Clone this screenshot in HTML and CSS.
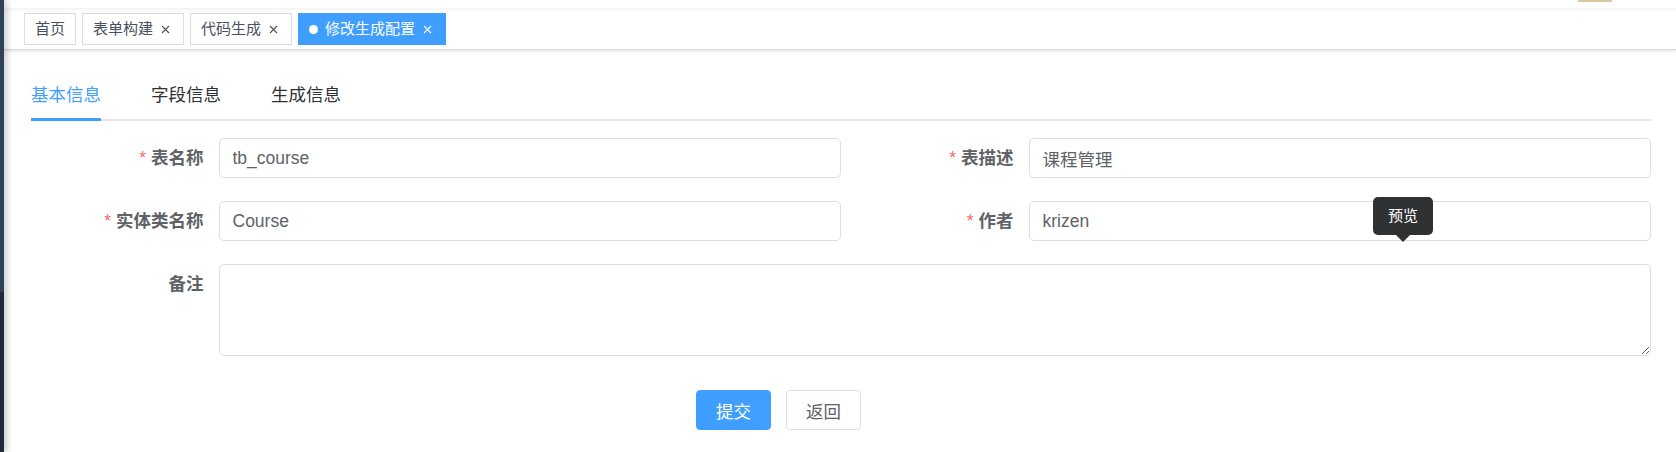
FILE: index.html
```html
<!DOCTYPE html>
<html lang="zh-CN">
<head>
  <meta charset="UTF-8">
  <meta name="viewport" content="width=device-width, initial-scale=1.0">
  <title>修改生成配置</title>
  <link rel="stylesheet" href="styles.css">
</head>
<body>
  <div class="layout">
    <aside class="sidebar"></aside>
    <div class="main">
      <div class="navbar"><span class="avatar-edge"></span></div>
      <div class="tags-view">
        <span class="tag">首页</span>
        <span class="tag">表单构建<i class="tag-close"><svg width="9" height="9" viewBox="0 0 9 9"><path d="M1 1L8 8M8 1L1 8"/></svg></i></span>
        <span class="tag">代码生成<i class="tag-close"><svg width="9" height="9" viewBox="0 0 9 9"><path d="M1 1L8 8M8 1L1 8"/></svg></i></span>
        <span class="tag active"><span class="dot"></span>修改生成配置<i class="tag-close"><svg width="9" height="9" viewBox="0 0 9 9"><path d="M1 1L8 8M8 1L1 8"/></svg></i></span>
      </div>

      <div class="app-container">
        <div class="tabs">
          <div class="tab active">基本信息</div>
          <div class="tab">字段信息</div>
          <div class="tab">生成信息</div>
        </div>

        <form class="gen-form" onsubmit="return false">
          <div class="form-row">
            <div class="form-item">
              <label class="form-label required">表名称</label>
              <div class="form-content"><input class="input" type="text" value="tb_course"></div>
            </div>
            <div class="form-item">
              <label class="form-label required">表描述</label>
              <div class="form-content"><input class="input" type="text" value="课程管理"></div>
            </div>
          </div>
          <div class="form-row">
            <div class="form-item">
              <label class="form-label required">实体类名称</label>
              <div class="form-content"><input class="input" type="text" value="Course"></div>
            </div>
            <div class="form-item">
              <label class="form-label required">作者</label>
              <div class="form-content"><input class="input" type="text" value="krizen"></div>
            </div>
          </div>
          <div class="form-item">
            <label class="form-label">备注</label>
            <div class="form-content"><textarea class="textarea"></textarea></div>
          </div>
          <div class="form-actions">
            <button class="btn primary" type="button">提交</button>
            <button class="btn" type="button">返回</button>
          </div>
        </form>
      </div>
    </div>

    <div class="tooltip">预览</div>
  </div>
</body>
</html>
```

FILE: styles.css
```css
body {
  margin: 0;
  font-family: "Liberation Sans", "Noto Sans CJK SC", sans-serif;
  background-color: #fff;
  color: #303133;
}
.layout {
  display: flex;
  height: 100vh;
  overflow: hidden;
}
.sidebar {
  width: 4px;
  flex-shrink: 0;
  background: linear-gradient(#304156 0, #304156 292px, #1f2a3a 292px);
  box-shadow: 2px 0 6px rgba(0, 21, 41, 0.35);
  position: relative;
  z-index: 3;
}
.main {
  flex: 1;
  display: flex;
  flex-direction: column;
  min-width: 0;
}
.navbar {
  height: 8px;
  display: flex;
  justify-content: flex-end;
  padding-right: 64px;
  background: #fff;
  box-shadow: 0 1px 4px rgba(0, 21, 41, 0.08);
  position: relative;
  z-index: 2;
}
.avatar-edge {
  width: 34px;
  height: 2px;
  background: #dcc7a0;
}
.tags-view {
  height: 42px;
  box-sizing: border-box;
  background: #fff;
  border-bottom: 1px solid #d8dce5;
  box-shadow: 0 1px 3px 0 rgba(0, 0, 0, 0.12), 0 0 3px 0 rgba(0, 0, 0, 0.04);
  display: flex;
  align-items: flex-start;
  padding-left: 20px;
  gap: 6px;
  position: relative;
  z-index: 1;
}
.tag {
  margin-top: 5px;
  height: 32px;
  box-sizing: border-box;
  line-height: 30px;
  border: 1px solid #d8dce5;
  color: #495060;
  background: #fff;
  padding: 0 10px;
  font-size: 15px;
  display: inline-flex;
  align-items: center;
  white-space: nowrap;
}
.tag .tag-close {
  width: 18px;
  height: 18px;
  margin-left: 3px;
  margin-right: -1px;
  display: inline-flex;
  align-items: center;
  justify-content: center;
}
.tag-close svg path {
  stroke: currentColor;
  stroke-width: 1.1;
  fill: none;
}
.tag.active {
  background: #409eff;
  border-color: #409eff;
  color: #fff;
}
.tag .dot {
  width: 9px;
  height: 9px;
  border-radius: 50%;
  background: #fff;
  margin-right: 7px;
}
.app-container {
  flex: 1;
  padding: 20px 25px 0 27px;
}
.tabs {
  display: flex;
  gap: 50px;
  border-bottom: 2px solid #e4e7ed;
  margin-bottom: 17px;
}
.tab {
  font-size: 17.5px;
  line-height: 46px;
  padding-top: 2px;
  color: #303133;
  border-bottom: 3px solid transparent;
  margin-bottom: -2px;
}
.tab.active {
  color: #409eff;
  border-bottom-color: #409eff;
}
.form-row {
  display: grid;
  grid-template-columns: 1fr 1fr;
}
.form-item {
  display: flex;
  margin-bottom: 23px;
}
.form-label {
  width: 187.5px;
  flex-shrink: 0;
  box-sizing: border-box;
  padding-right: 15px;
  text-align: right;
  font-size: 17.5px;
  line-height: 40px;
  font-weight: bold;
  color: #606266;
}
.form-label.required::before {
  content: "*";
  color: #f56c6c;
  margin-right: 5px;
  font-weight: normal;
}
.form-content {
  flex: 1;
  min-width: 0;
}
.input,
.textarea {
  display: block;
  width: 100%;
  box-sizing: border-box;
  border: 1px solid #dcdfe6;
  border-radius: 5px;
  font: inherit;
  font-size: 17.5px;
  color: #606266;
  background: #fff;
  outline: none;
}
.input {
  height: 40px;
  padding: 0 13px;
}
.textarea {
  height: 92px;
  padding: 6px 15px;
  resize: vertical;
}
.form-actions {
  display: flex;
  justify-content: center;
  gap: 15px;
  padding-right: 125px;
  margin-top: 34px;
}
.btn {
  height: 40px;
  padding: 0 19px;
  font: inherit;
  font-size: 17.5px;
  border: 1px solid #dcdfe6;
  border-radius: 4px;
  background: #fff;
  color: #606266;
  cursor: pointer;
}
.btn.primary {
  background: #409eff;
  border-color: #409eff;
  color: #fff;
}
.tooltip {
  position: absolute;
  left: 1373px;
  top: 197px;
  width: 60px;
  height: 38px;
  line-height: 38px;
  text-align: center;
  font-size: 15px;
  color: #fff;
  background: #303133;
  border-radius: 5px;
  z-index: 5;
}
.tooltip::after {
  content: "";
  position: absolute;
  left: 50%;
  top: 100%;
  margin-left: -7px;
  border: 7px solid transparent;
  border-top-color: #303133;
  border-bottom-width: 0;
}
```
